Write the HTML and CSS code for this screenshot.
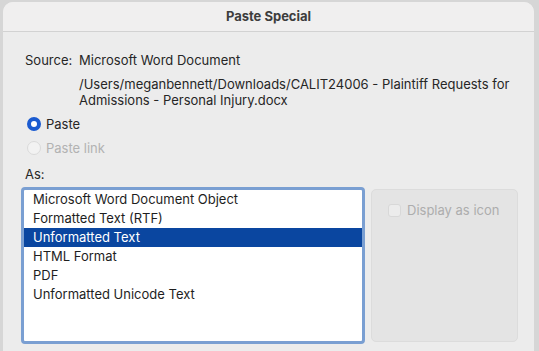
FILE: index.html
```html
<!DOCTYPE html>
<html>
<head><title>Paste Special</title>
<link rel="stylesheet" href="styles.css">
</head>
<body>
<div class="dialog">
  <div class="titlebar">Paste Special</div>
  <div class="content">
    <div class="source">
      <span class="source-label">Source:</span>
      <span>Microsoft Word Document</span>
    </div>
    <div class="path">/Users/meganbennett/Downloads/CALIT24006 - Plaintiff Requests for Admissions - Personal Injury.docx</div>

    <div class="radio-row">
      <span class="radio checked"></span>
      <span>Paste</span>
    </div>
    <div class="radio-row disabled">
      <span class="radio"></span>
      <span>Paste link</span>
    </div>

    <div class="as-label">As:</div>
    <div class="as-row">
      <div class="listbox">
        <div class="item">Microsoft Word Document Object</div>
        <div class="item">Formatted Text (RTF)</div>
        <div class="item selected">Unformatted Text</div>
        <div class="item">HTML Format</div>
        <div class="item">PDF</div>
        <div class="item">Unformatted Unicode Text</div>
      </div>
      <div class="options">
        <label class="check-row">
          <span class="checkbox"></span>
          <span>Display as icon</span>
        </label>
      </div>
    </div>
  </div>
</div>
</body>
</html>
```

FILE: styles.css
```css
body {
  margin: 0;
  padding: 2px 5px 0 3px;
  background-color: #d6d6d6;
  font-family: Inter, "Liberation Sans", Arial, sans-serif;
  font-size: 13px;
  color: #262626;
  height: 349px;
  overflow: hidden;
}

.dialog {
  background-color: #ececec;
  border-radius: 10px 10px 0 0;
  height: 349px;
}

.titlebar {
  height: 29px;
  line-height: 29px;
  text-align: center;
  font-weight: bold;
  color: #3d3d3d;
  background-color: #f0efef;
  border-bottom: 1px solid #d2d2d2;
  border-radius: 10px 10px 0 0;
}

.content {
  padding: 20px 0 0 22px;
  line-height: 16px;
}

.source {
  display: flex;
}

.source-label {
  width: 54px;
}

.path {
  margin: 8px 0 0 54px;
  width: 445px;
}

.radio-row {
  display: flex;
  align-items: center;
  margin-top: 8px;
}

.radio-row.disabled {
  color: #b2b2b2;
}

.radio {
  width: 14px;
  height: 14px;
  box-sizing: border-box;
  border-radius: 50%;
  margin: 0 5px 0 2px;
  border: 1px solid #dadada;
  background-color: #f2f2f2;
}

.radio.checked {
  border: 4px solid #1b5bd0;
  background-color: #fff;
}

.as-label {
  margin-top: 10px;
}

.as-row {
  display: flex;
  align-items: flex-start;
  margin: 5px 0 0 -4px;
}

.listbox {
  width: 338px;
  height: 151px;
  border: 3px solid #7a9fd2;
  border-radius: 4px;
  background-color: #fff;
}

.item {
  height: 19px;
  line-height: 19px;
  padding-left: 9px;
  color: #1e1e1e;
}

.item.selected {
  background-color: #0a46a0;
  color: #fff;
}

.options {
  margin: 2px 0 0 6px;
  width: 145px;
  height: 151px;
  border: 1px solid #dcdcdc;
  border-radius: 5px;
  background-color: #e4e4e4;
}

.check-row {
  display: flex;
  align-items: center;
  margin: 12px 0 0 16px;
  color: #adadad;
}

.checkbox {
  width: 13px;
  height: 13px;
  box-sizing: border-box;
  border: 1px solid #d8d8d8;
  border-radius: 3px;
  background-color: #ececec;
  margin-right: 6px;
}
```
